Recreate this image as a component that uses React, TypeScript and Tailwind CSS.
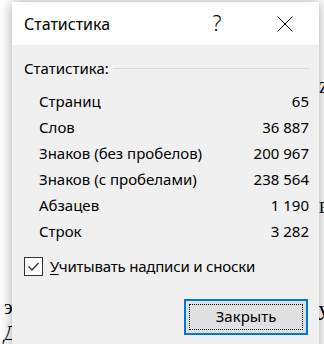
import React from "react";

const font = { fontFamily: '"Noto Sans", "Open Sans", sans-serif' };
const serif = { fontFamily: '"Liberation Serif", serif' };

const rows: [string, string][] = [
  ["Страниц", "65"],
  ["Слов", "36 887"],
  ["Знаков (без пробелов)", "200 967"],
  ["Знаков (с пробелами)", "238 564"],
  ["Абзацев", "1 190"],
  ["Строк", "3 282"],
];

export default function App() {
  return (
    <div className="relative w-[324px] h-[344px] overflow-hidden bg-white" style={font}>
      {/* document glyphs behind the dialog */}
      <span className="absolute left-[4px] top-[292px] text-[20px] text-black" style={serif}>э</span>
      <span className="absolute left-[4px] top-[318px] text-[20px] italic text-black" style={serif}>Д</span>
      <span className="absolute left-[316px] top-[296px] text-[22px] italic text-black" style={serif}>У</span>
      <span className="absolute left-[319px] top-[76px] text-[16px] text-black" style={serif}>Z</span>
      <span className="absolute left-[319px] top-[196px] text-[16px] text-black" style={serif}>E</span>

      <div className="relative ml-[12px] mt-[2px] w-[307px] h-[360px] shadow-[0_0_12px_rgba(0,0,0,0.35)] flex flex-col">
        {/* title bar */}
        <div className="h-[43px] bg-white flex items-center pl-[12px] text-[16px] text-black">
          <span className="flex-1">Статистика</span>
          <span className="w-[20px] text-center text-[21px] leading-none mr-[50px] font-light">?</span>
          <svg width="16" height="16" viewBox="0 0 16 16" className="mr-[26px]">
            <path d="M0.5 0.5 L15.5 15.5 M15.5 0.5 L0.5 15.5" stroke="#000" strokeWidth="1" fill="none" />
          </svg>
        </div>

        {/* body */}
        <div className="flex-1 bg-[#f0f0f0] pt-[10px] pl-[12px] pr-[10px] text-[15px] text-black">
          <div className="h-[26px] flex items-center">
            <span>Статистика:</span>
            <div className="flex-1 ml-[4px] h-px bg-[#d9d9d9]" />
          </div>
          <div className="mt-[7px] pl-[15px]">
            {rows.map(([k, v]) => (
              <div key={k} className="h-[26px] flex items-center justify-between">
                <span>{k}</span>
                <span>{v}</span>
              </div>
            ))}
          </div>

          <div className="mt-[11px] flex items-center">
            <div className="w-[19px] h-[19px] border border-[#333] bg-white flex items-center justify-center">
              <svg width="13" height="13" viewBox="0 0 13 13">
                <path d="M1.5 6.5 L5 10 L11.5 3" stroke="#333" strokeWidth="1.3" fill="none" />
              </svg>
            </div>
            <span className="ml-[7px] tracking-[-0.2px]">
              <span className="underline underline-offset-2">У</span>читывать надписи и сноски
            </span>
          </div>

          <div className="mt-[21px] flex justify-end">
            <button className="w-[124px] h-[36px] border-2 border-[#0078d7] bg-[#e1e1e1] p-[3px] mr-[1px]">
              <div className="w-full h-full border border-dotted border-black flex items-center justify-center text-[15px]">
                Закрыть
              </div>
            </button>
          </div>
        </div>
      </div>
    </div>
  );
}
